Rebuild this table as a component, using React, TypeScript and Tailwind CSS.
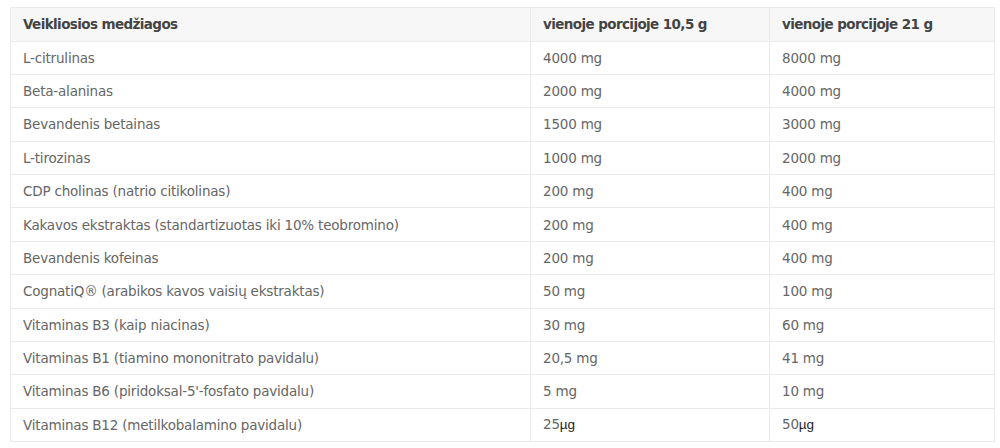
import React from "react";

const rows: [string, React.ReactNode, React.ReactNode][] = [
  ["L-citrulinas", "4000 mg", "8000 mg"],
  ["Beta-alaninas", "2000 mg", "4000 mg"],
  ["Bevandenis betainas", "1500 mg", "3000 mg"],
  ["L-tirozinas", "1000 mg", "2000 mg"],
  ["CDP cholinas (natrio citikolinas)", "200 mg", "400 mg"],
  ["Kakavos ekstraktas (standartizuotas iki 10% teobromino)", "200 mg", "400 mg"],
  ["Bevandenis kofeinas", "200 mg", "400 mg"],
  ["CognatiQ® (arabikos kavos vaisių ekstraktas)", "50 mg", "100 mg"],
  ["Vitaminas B3 (kaip niacinas)", "30 mg", "60 mg"],
  ["Vitaminas B1 (tiamino mononitrato pavidalu)", "20,5 mg", "41 mg"],
  ["Vitaminas B6 (piridoksal-5'-fosfato pavidalu)", "5 mg", "10 mg"],
  [
    "Vitaminas B12 (metilkobalamino pavidalu)",
    <>25<span className="font-['Liberation_Sans',sans-serif] text-[#222] tracking-normal">µg</span></>,
    <>50<span className="font-['Liberation_Sans',sans-serif] text-[#222] tracking-normal">µg</span></>,
  ],
];

export default function App() {
  return (
    <div className="w-[1000px] h-[448px] bg-white pl-[10px] pt-[7px] font-['DejaVu_Sans',sans-serif]">
      <table className="w-[984px] border-collapse table-fixed text-[13.5px] tracking-[-0.2px]">
        <colgroup>
          <col className="w-[520px]" />
          <col className="w-[239px]" />
          <col className="w-[225px]" />
        </colgroup>
        <thead>
          <tr className="bg-[#f7f7f7] h-[33.5px]">
            <th className="border border-[#ebebeb] text-left font-bold text-[#444] pl-[12px] py-0 tracking-[-0.6px]">Veikliosios medžiagos</th>
            <th className="border border-[#ebebeb] text-left font-bold text-[#444] pl-[12px] py-0 tracking-[-0.6px]">vienoje porcijoje 10,5 g</th>
            <th className="border border-[#ebebeb] text-left font-bold text-[#444] pl-[12px] py-0 tracking-[-0.6px]">vienoje porcijoje 21 g</th>
          </tr>
        </thead>
        <tbody>
          {rows.map((r, i) => (
            <tr key={i} className="h-[33.4px]">
              <td className="border border-[#ebebeb] text-[#666] pl-[12px] py-0">{r[0]}</td>
              <td className="border border-[#ebebeb] text-[#666] pl-[12px] py-0">{r[1]}</td>
              <td className="border border-[#ebebeb] text-[#666] pl-[12px] py-0">{r[2]}</td>
            </tr>
          ))}
        </tbody>
      </table>
    </div>
  );
}
